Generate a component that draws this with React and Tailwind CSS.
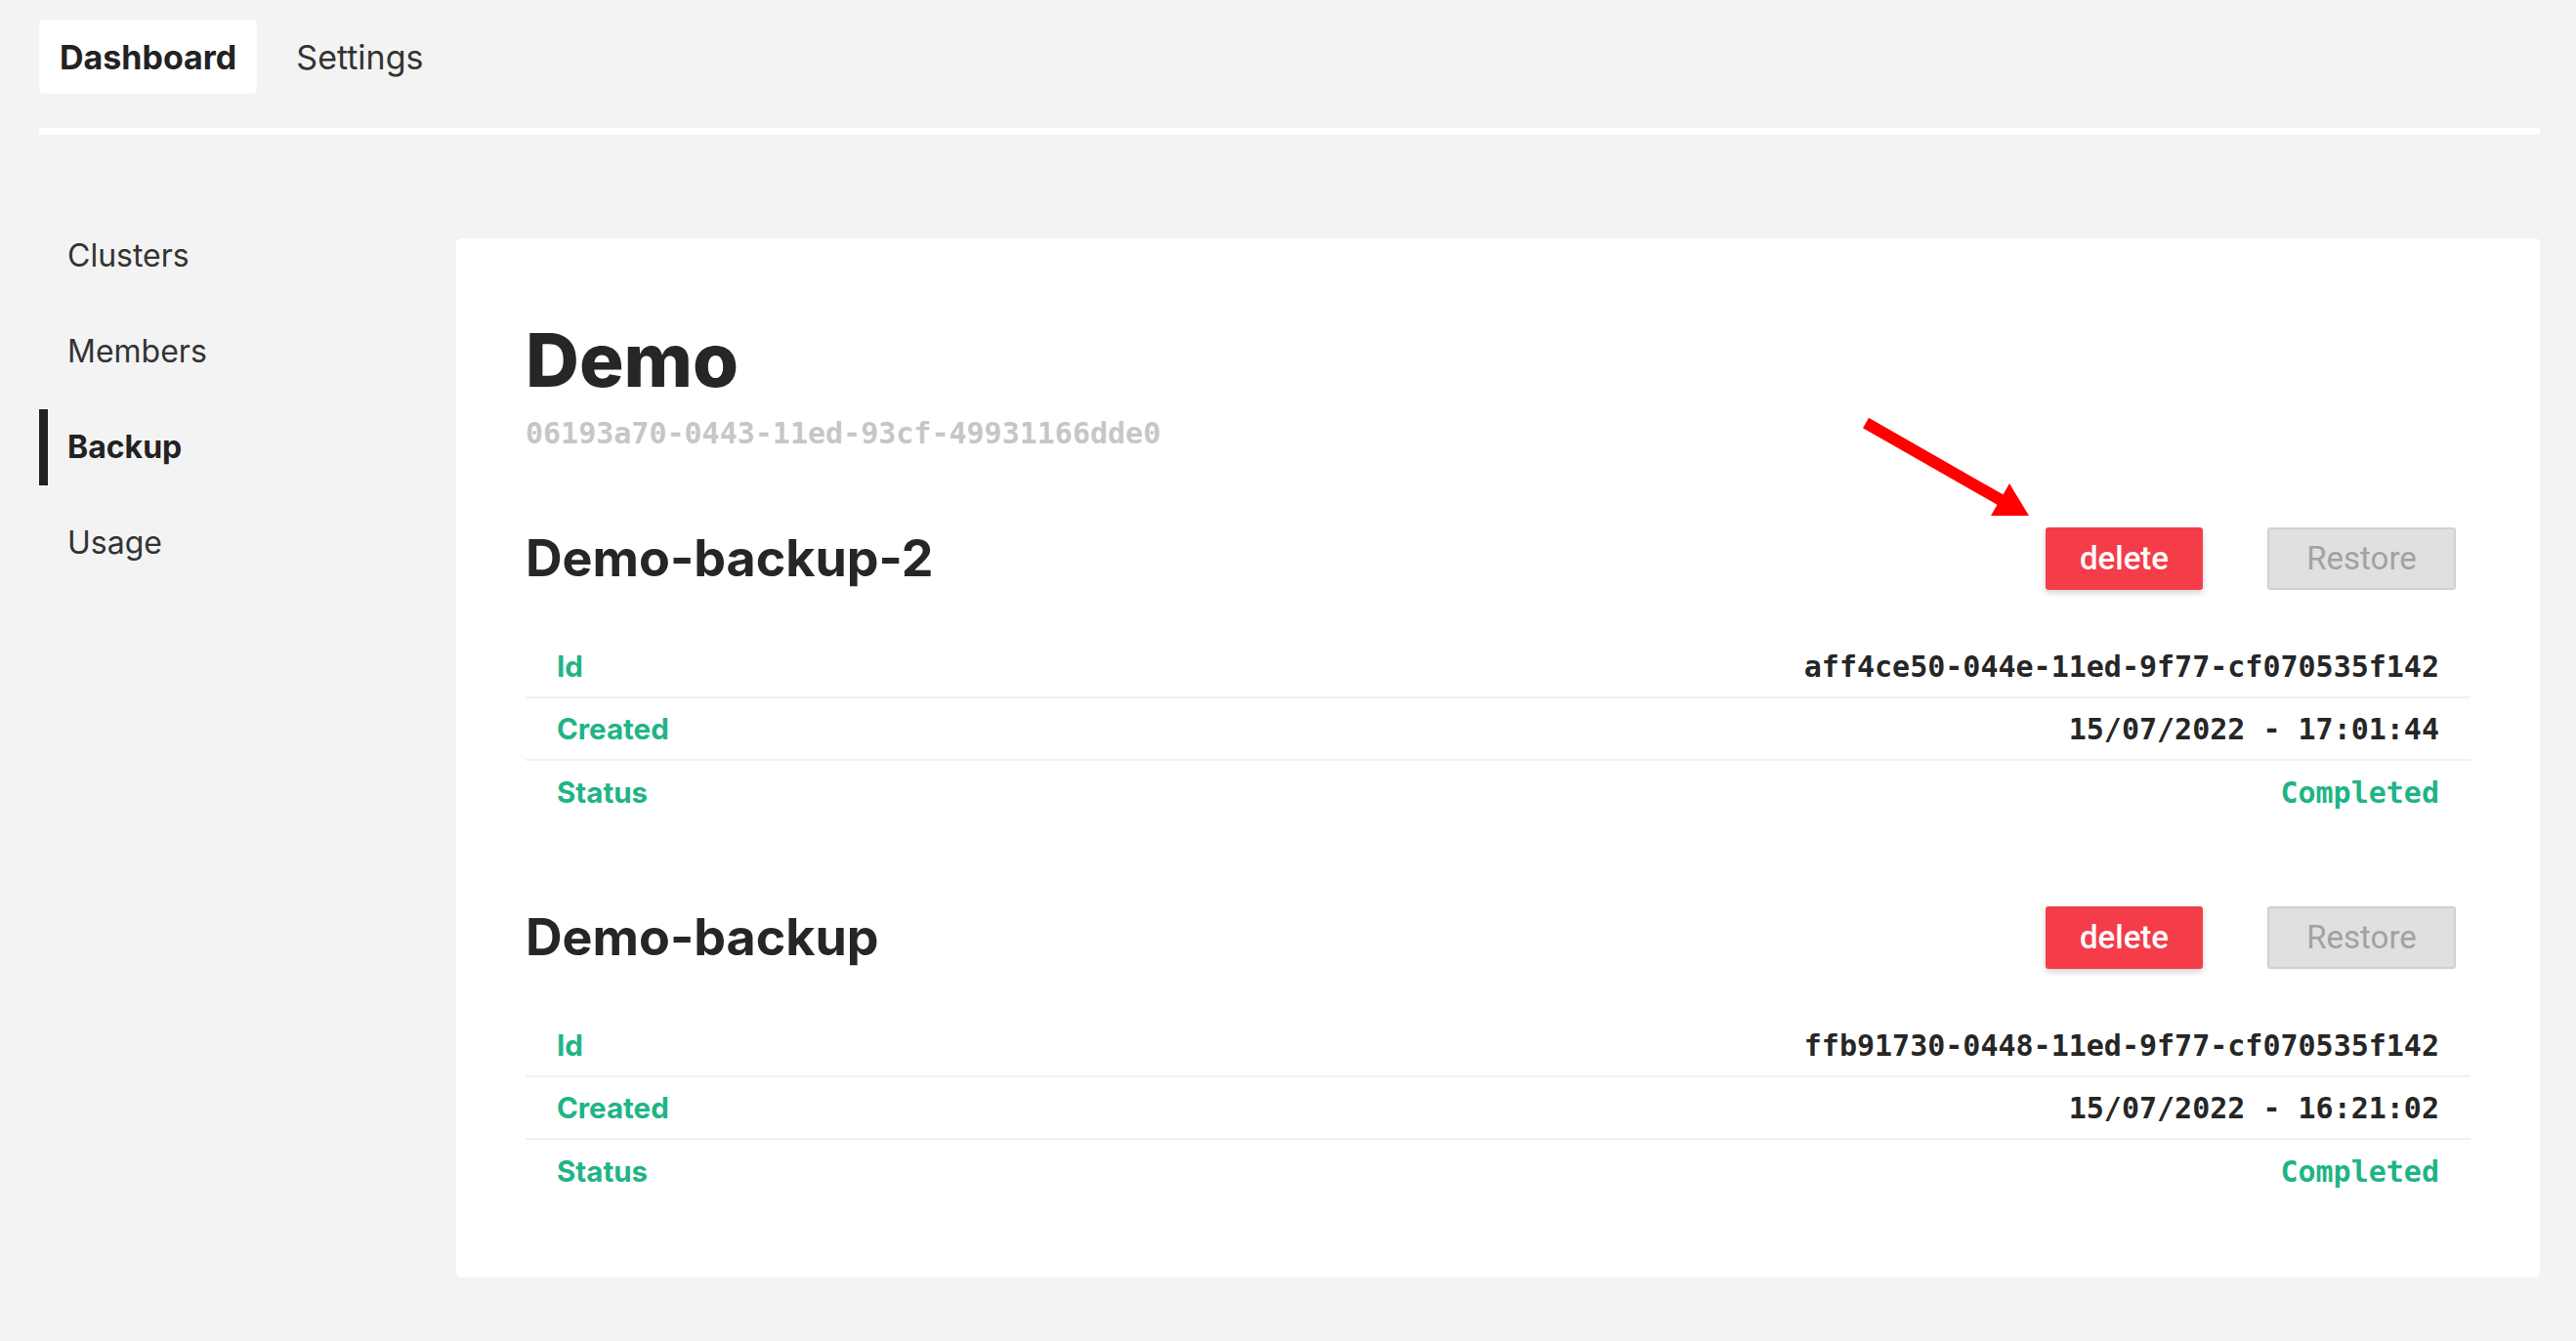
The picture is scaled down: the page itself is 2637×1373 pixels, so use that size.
import React from "react";

const backups = [
  {
    name: "Demo-backup-2",
    id: "aff4ce50-044e-11ed-9f77-cf070535f142",
    created: "15/07/2022 - 17:01:44",
    status: "Completed",
  },
  {
    name: "Demo-backup",
    id: "ffb91730-0448-11ed-9f77-cf070535f142",
    created: "15/07/2022 - 16:21:02",
    status: "Completed",
  },
];

const navItems = ["Clusters", "Members", "Backup", "Usage"];

const Row = ({ label, children, last }) => (
  <div
    className={`h-[64px] px-[32px] flex items-center justify-between ${
      last ? "" : "border-b-2 border-[#f1f1f1]"
    }`}
  >
    <span className="font-['Inter',sans-serif] text-[29.5px] font-bold text-[#1fb487]">{label}</span>
    {children}
  </div>
);

const Backup = ({ backup, first }) => (
  <section className={first ? "mt-[78px]" : "mt-[85px]"}>
    <div className="h-[64px] flex items-center justify-between">
      <h2 className="text-[52px] leading-none font-bold text-[#262626]">{backup.name}</h2>
      <div className="flex gap-[66px] mr-[15px] font-['Roboto',sans-serif]">
        <button className="w-[161px] h-[64px] rounded-[3px] bg-[#f53c49] text-white text-[33px] font-medium shadow-[0_3px_6px_rgba(0,0,0,0.18)]">
          delete
        </button>
        <button className="w-[193px] h-[64px] rounded-[3px] bg-[#e0e0e0] border-2 border-[#cbd2d2] text-[#a2a2a2] text-[33px]">
          Restore
        </button>
      </div>
    </div>

    <div className="mt-[47px]">
      <Row label="Id">
        <span className="font-['DejaVu_Sans_Mono',monospace] text-[30px] font-bold text-[#262626]">
          {backup.id}
        </span>
      </Row>
      <Row label="Created">
        <span className="font-['DejaVu_Sans_Mono',monospace] text-[30px] font-bold text-[#262626]">
          {backup.created}
        </span>
      </Row>
      <Row label="Status" last>
        <span className="font-['DejaVu_Sans_Mono',monospace] text-[30px] font-bold text-[#1fb487]">
          {backup.status}
        </span>
      </Row>
    </div>
  </section>
);

export default function App() {
  return (
    <div className="relative min-h-screen bg-[#f3f3f3] font-['Inter',sans-serif] text-[#262626]">
      <div className="pl-[40px] pr-[37px] pt-[20px] pb-[65px]">
        {/* top tabs */}
        <nav className="flex gap-[19px]">
          <a className="h-[76px] px-[21px] flex items-center bg-white rounded-[5px] text-[34px] font-bold text-[#222]">
            Dashboard
          </a>
          <a className="h-[76px] px-[21px] flex items-center text-[34px] text-[#333]">
            Settings
          </a>
        </nav>
        <div className="mt-[35px] h-[7px] bg-white" />

        <div className="flex items-start">
          {/* sidebar */}
          <aside className="w-[427px] shrink-0 pt-[85px] flex flex-col gap-[20px]">
            {navItems.map((item) => {
              const active = item === "Backup";
              return (
                <a
                  key={item}
                  className={`h-[78px] pl-[20px] flex items-center border-l-[9px] text-[32px] ${
                    active
                      ? "border-[#222] font-bold text-[#222]"
                      : "border-transparent text-[#333]"
                  }`}
                >
                  {item}
                </a>
              );
            })}
          </aside>

          {/* main card */}
          <main className="flex-1 mt-[106px] bg-white rounded-[5px] px-[71px] pt-[88px] pb-[77px]">
            <h1 className="text-[76px] leading-[72px] font-extrabold text-[#262626]">Demo</h1>
            <p className="mt-[22px] font-['DejaVu_Sans_Mono',monospace] text-[30px] leading-[36px] font-bold text-[#c6c6c6]">
              06193a70-0443-11ed-93cf-49931166dde0
            </p>

            {backups.map((b, i) => (
              <Backup key={b.id} backup={b} first={i === 0} />
            ))}
          </main>
        </div>
      </div>

      {/* annotation arrow */}
      <svg
        className="absolute left-0 top-0 pointer-events-none"
        width="2637"
        height="1373"
        viewBox="0 0 2637 1373"
      >
        <line x1="1910" y1="433" x2="2050" y2="513" stroke="#ff0000" strokeWidth="12" />
        <polygon points="2077,528 2057,495 2038,528" fill="#ff0000" />
      </svg>
    </div>
  );
}
